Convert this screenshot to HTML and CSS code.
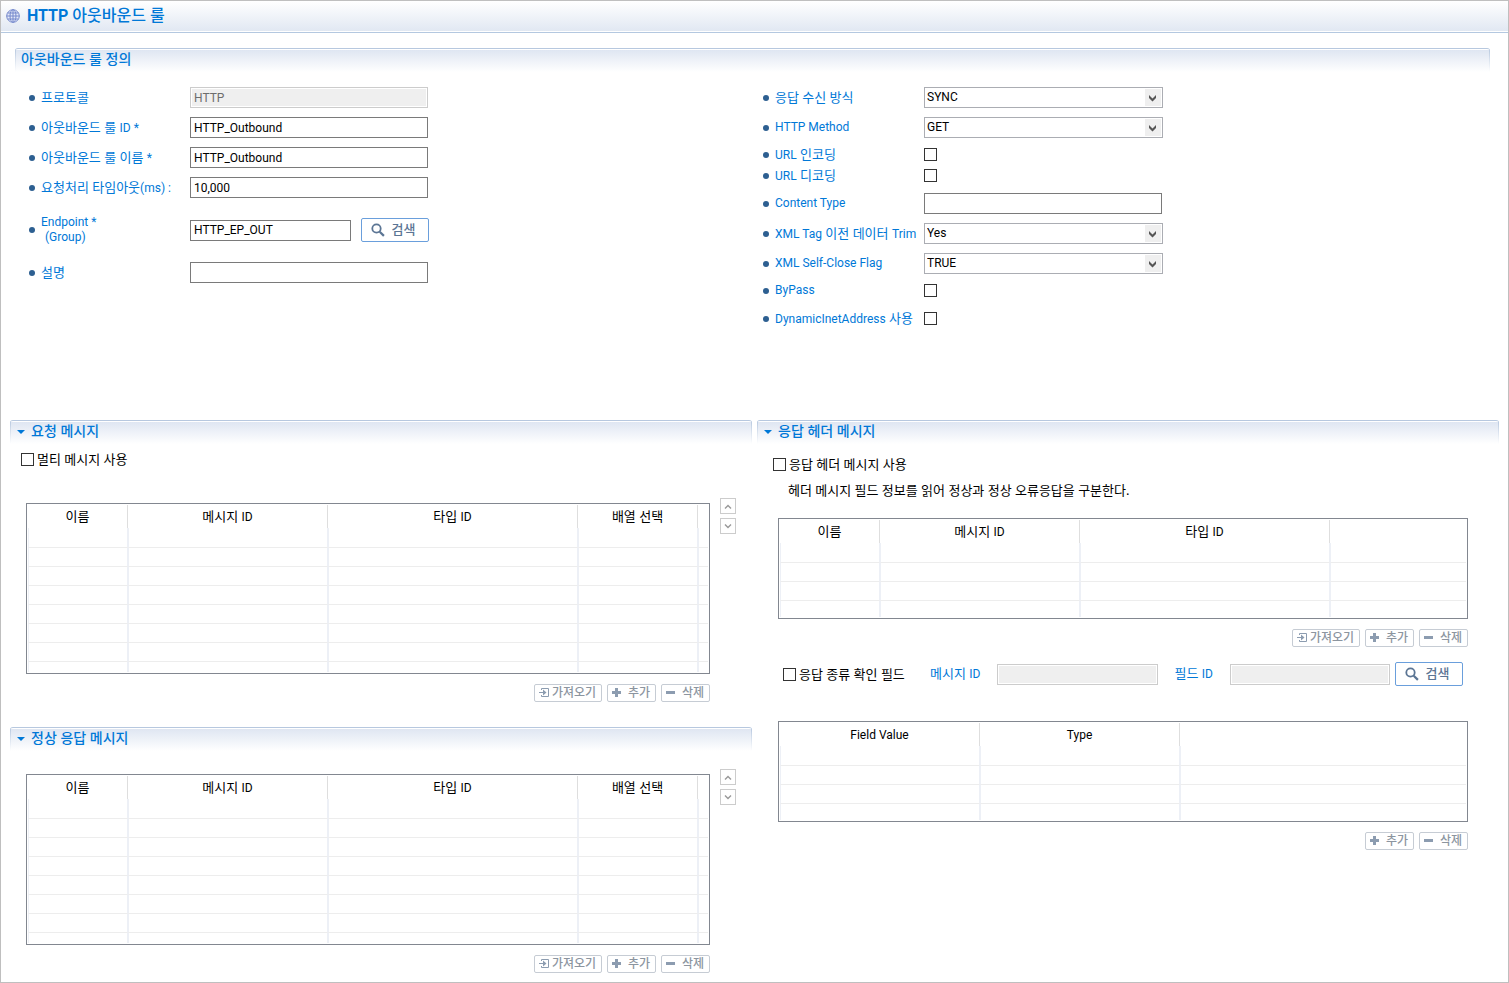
FILE: index.html
```html
<!DOCTYPE html>
<html lang="ko">
<head>
<meta charset="utf-8">
<title>HTTP 아웃바운드 룰</title>
<link rel="stylesheet" href="styles.css">
</head>
<body>
<svg class="sprite" aria-hidden="true">
  <symbol id="chevron" viewBox="0 0 9 7"><path d="M1 0v3l3.500 3.500L8 3V0L4.500 3.500z"/></symbol>
  <symbol id="search" viewBox="0 0 14 14"><circle cx="5.500" cy="5.500" r="4.200" fill="none" stroke="currentColor" stroke-width="1.800"/><path d="M8.700 8.700l4.200 4.200" stroke="currentColor" stroke-width="2.200"/></symbol>
  <symbol id="import" viewBox="0 0 10 9"><path d="M2.500 2V.500h7v8h-7V7" fill="none" stroke="currentColor"/><path d="M0 4h4V1.500l3.500 3L4 7.500V5H0z" fill="currentColor"/></symbol>
  <symbol id="plus" viewBox="0 0 9 9"><path d="M3 0h3v3h3v3H6v3H3V6H0V3h3z" fill="currentColor"/></symbol>
  <symbol id="minus" viewBox="0 0 9 9"><path d="M0 3h9v3H0z" fill="currentColor"/></symbol>
  <symbol id="up" viewBox="0 0 8 5"><path d="M1 4.500l3-3 3 3" fill="none" stroke="currentColor" stroke-width="1.400"/></symbol>
  <symbol id="down" viewBox="0 0 8 5"><path d="M1 .500l3 3 3-3" fill="none" stroke="currentColor" stroke-width="1.400"/></symbol>
</svg>
<div class="page">
  <header class="title-bar">
    <svg class="globe" viewBox="0 0 14 14" aria-hidden="true"><circle cx="7" cy="7" r="6.300"/><ellipse cx="7" cy="7" rx="3" ry="6.300"/><path d="M7 .700v12.600M.700 7h12.600M1.600 4h10.800M1.600 10h10.800"/></svg>
    <h1 class="title"><b>HTTP</b> 아웃바운드 룰</h1>
  </header>

  <section class="definition">
    <h2 class="section-head section-head-wide">아웃바운드 룰 정의</h2>
    <form class="form">
      <div class="fields">
        <div class="row"><label class="label" for="protocol">프로토콜</label><input class="text" id="protocol" value="HTTP" disabled></div>
        <div class="row"><label class="label" for="rule-id"><span>아웃바운드 룰 <span lang="en">ID *</span></span></label><input class="text" id="rule-id" value="HTTP_Outbound"></div>
        <div class="row"><label class="label" for="rule-name"><span>아웃바운드 룰 이름 <span lang="en">*</span></span></label><input class="text" id="rule-name" value="HTTP_Outbound"></div>
        <div class="row"><label class="label" for="timeout"><span>요청처리 타임아웃<span lang="en">(ms) :</span></span></label><input class="text" id="timeout" value="10,000"></div>
        <div class="row row-tall"><label class="label" for="endpoint"><span class="stack" lang="en"><span>Endpoint *</span><span class="indent">(Group)</span></span></label><input class="text text-short" id="endpoint" value="HTTP_EP_OUT"><button class="search search-gap" type="button"><svg class="search-icon"><use href="#search"/></svg>검색</button></div>
        <div class="row"><label class="label" for="desc">설명</label><input class="text" id="desc"></div>
      </div>
      <div class="fields">
        <div class="row"><label class="label" for="sync">응답 수신 방식</label><span class="select-box"><select class="select" id="sync"><option>SYNC</option></select><svg class="chevron"><use href="#chevron"/></svg></span></div>
        <div class="row"><label class="label" for="method"><span lang="en">HTTP Method</span></label><span class="select-box"><select class="select" id="method"><option>GET</option></select><svg class="chevron"><use href="#chevron"/></svg></span></div>
        <div class="pair">
          <div class="row row-check"><label class="label" for="encode"><span><span lang="en">URL</span> 인코딩</span></label><input class="check" type="checkbox" id="encode"></div>
          <div class="row row-check"><label class="label" for="decode"><span><span lang="en">URL</span> 디코딩</span></label><input class="check" type="checkbox" id="decode"></div>
        </div>
        <div class="row"><label class="label" for="ctype"><span lang="en">Content Type</span></label><input class="text" id="ctype"></div>
        <div class="row"><label class="label" for="trim"><span><span lang="en">XML Tag</span> 이전 데이터 <span lang="en">Trim</span></span></label><span class="select-box"><select class="select" id="trim"><option>Yes</option></select><svg class="chevron"><use href="#chevron"/></svg></span></div>
        <div class="row"><label class="label" for="selfclose"><span lang="en">XML Self-Close Flag</span></label><span class="select-box"><select class="select" id="selfclose"><option>TRUE</option></select><svg class="chevron"><use href="#chevron"/></svg></span></div>
        <div class="row row-check"><label class="label" for="bypass"><span lang="en">ByPass</span></label><input class="check" type="checkbox" id="bypass"></div>
        <div class="row row-check row-spaced"><label class="label" for="dynamic"><span><span lang="en">DynamicInetAddress</span> 사용</span></label><input class="check" type="checkbox" id="dynamic"></div>
      </div>
    </form>
  </section>

  <main class="panels">
    <div class="panel-column">
      <section>
        <h2 class="section-head"><button class="toggle" type="button">요청 메시지</button></h2>
        <label class="check-line"><input class="check" type="checkbox">멀티 메시지 사용</label>
        <div class="grid-area">
          <div class="grid-side">
            <div class="grid-main">
              <table class="grid">
                <colgroup><col class="c100"><col class="c200"><col class="c250"><col class="c120"><col></colgroup>
                <thead><tr><th>이름</th><th>메시지 <span lang="en">ID</span></th><th>타입 <span lang="en">ID</span></th><th>배열 선택</th><th class="last"></th></tr></thead>
                <tbody>
                  <tr><td></td><td></td><td></td><td></td><td class="last"></td></tr>
                  <tr><td></td><td></td><td></td><td></td><td class="last"></td></tr>
                  <tr><td></td><td></td><td></td><td></td><td class="last"></td></tr>
                  <tr><td></td><td></td><td></td><td></td><td class="last"></td></tr>
                  <tr><td></td><td></td><td></td><td></td><td class="last"></td></tr>
                  <tr><td></td><td></td><td></td><td></td><td class="last"></td></tr>
                  <tr><td></td><td></td><td></td><td></td><td class="last"></td></tr>
                  <tr><td></td><td></td><td></td><td></td><td class="last"></td></tr>
                </tbody>
              </table>
              <div class="actions">
                <button class="action" type="button"><svg class="import-icon"><use href="#import"/></svg>가져오기</button>
                <button class="action action-small" type="button"><svg class="sign-icon"><use href="#plus"/></svg>추가</button>
                <button class="action action-small" type="button"><svg class="sign-icon"><use href="#minus"/></svg>삭제</button>
              </div>
            </div>
            <div class="movers">
              <button class="mover" type="button" aria-label="위로"><svg class="mover-icon"><use href="#up"/></svg></button>
              <button class="mover" type="button" aria-label="아래로"><svg class="mover-icon"><use href="#down"/></svg></button>
            </div>
          </div>
        </div>
      </section>
      <section>
        <h2 class="section-head"><button class="toggle" type="button">정상 응답 메시지</button></h2>
        <div class="grid-area">
          <div class="grid-side">
            <div class="grid-main">
              <table class="grid">
                <colgroup><col class="c100"><col class="c200"><col class="c250"><col class="c120"><col></colgroup>
                <thead><tr><th>이름</th><th>메시지 <span lang="en">ID</span></th><th>타입 <span lang="en">ID</span></th><th>배열 선택</th><th class="last"></th></tr></thead>
                <tbody>
                  <tr><td></td><td></td><td></td><td></td><td class="last"></td></tr>
                  <tr><td></td><td></td><td></td><td></td><td class="last"></td></tr>
                  <tr><td></td><td></td><td></td><td></td><td class="last"></td></tr>
                  <tr><td></td><td></td><td></td><td></td><td class="last"></td></tr>
                  <tr><td></td><td></td><td></td><td></td><td class="last"></td></tr>
                  <tr><td></td><td></td><td></td><td></td><td class="last"></td></tr>
                  <tr><td></td><td></td><td></td><td></td><td class="last"></td></tr>
                  <tr><td></td><td></td><td></td><td></td><td class="last"></td></tr>
                </tbody>
              </table>
              <div class="actions">
                <button class="action" type="button"><svg class="import-icon"><use href="#import"/></svg>가져오기</button>
                <button class="action action-small" type="button"><svg class="sign-icon"><use href="#plus"/></svg>추가</button>
                <button class="action action-small" type="button"><svg class="sign-icon"><use href="#minus"/></svg>삭제</button>
              </div>
            </div>
            <div class="movers">
              <button class="mover" type="button" aria-label="위로"><svg class="mover-icon"><use href="#up"/></svg></button>
              <button class="mover" type="button" aria-label="아래로"><svg class="mover-icon"><use href="#down"/></svg></button>
            </div>
          </div>
        </div>
      </section>
    </div>

    <section class="panel-column">
      <h2 class="section-head"><button class="toggle" type="button">응답 헤더 메시지</button></h2>
      <div class="header-body">
        <label class="check-line check-line-outer"><input class="check" type="checkbox">응답 헤더 메시지 사용</label>
        <p class="note">헤더 메시지 필드 정보를 읽어 정상과 정상 오류응답을 구분한다.</p>
        <table class="grid grid-low">
          <colgroup><col class="c100"><col class="c200"><col class="c250"><col></colgroup>
          <thead><tr><th>이름</th><th>메시지 <span lang="en">ID</span></th><th>타입 <span lang="en">ID</span></th><th class="last"></th></tr></thead>
          <tbody>
            <tr><td></td><td></td><td></td><td class="last"></td></tr>
            <tr><td></td><td></td><td></td><td class="last"></td></tr>
            <tr><td></td><td></td><td></td><td class="last"></td></tr>
            <tr><td></td><td></td><td></td><td class="last"></td></tr>
          </tbody>
        </table>
        <div class="actions">
          <button class="action" type="button"><svg class="import-icon"><use href="#import"/></svg>가져오기</button>
          <button class="action action-small" type="button"><svg class="sign-icon"><use href="#plus"/></svg>추가</button>
          <button class="action action-small" type="button"><svg class="sign-icon"><use href="#minus"/></svg>삭제</button>
        </div>
        <div class="field-line">
          <label class="check-line check-line-inline"><input class="check" type="checkbox">응답 종류 확인 필드</label>
          <label class="blue message-label" for="msg-id">메시지 <span lang="en">ID</span></label><input class="text text-short" id="msg-id" disabled>
          <label class="blue field-label" for="field-id">필드 <span lang="en">ID</span></label><input class="text text-short" id="field-id" disabled>
          <button class="search" type="button"><svg class="search-icon"><use href="#search"/></svg>검색</button>
        </div>
        <table class="grid grid-low">
          <colgroup><col class="c200"><col class="c200"><col></colgroup>
          <thead><tr><th><span lang="en">Field Value</span></th><th><span lang="en">Type</span></th><th class="last"></th></tr></thead>
          <tbody>
            <tr><td></td><td></td><td class="last"></td></tr>
            <tr><td></td><td></td><td class="last"></td></tr>
            <tr><td></td><td></td><td class="last"></td></tr>
            <tr><td></td><td></td><td class="last"></td></tr>
          </tbody>
        </table>
        <div class="actions">
          <button class="action action-small" type="button"><svg class="sign-icon"><use href="#plus"/></svg>추가</button>
          <button class="action action-small" type="button"><svg class="sign-icon"><use href="#minus"/></svg>삭제</button>
        </div>
      </div>
    </section>
  </main>
</div>
</body>
</html>
```

FILE: styles.css
```css
* { box-sizing: border-box; }

body {
  margin: 0;
  background: #fff;
  color: #000;
  font: 13px/15px "Noto Sans", "Noto Sans CJK KR", sans-serif;
}

button, input, select { margin: 0; font: inherit; color: inherit; }
input, select, [lang="en"] { font-family: Roboto, "Noto Sans CJK KR", sans-serif; font-size: 12px; }
h1, h2, p { margin: 0; }
.sprite { display: none; }

.page {
  min-height: 100vh;
  border: 1px solid #bfbfbf;
}

.title-bar {
  display: flex;
  align-items: center;
  gap: 7px;
  height: 32px;
  padding: 0 5px 2px;
  border-bottom: 1px solid #b4c8e0;
  background: linear-gradient(#fff, #e0e7f2);
  box-shadow: inset 0 -1px #fff;
}
.globe { width: 14px; height: 14px; fill: #e4e9f8; stroke: #7488cc; stroke-width: 1; }
.title { color: #0078d7; font: 500 16px/20px Roboto, "Noto Sans CJK KR", sans-serif; }

.definition { padding-top: 15px; }

.section-head {
  height: 24px;
  padding-left: 10px;
  border-top: 1px solid #b7c8df;
  border-radius: 3px 3px 0 0;
  background:
    linear-gradient(#b7c8df, #fff) left / 1px 100% no-repeat,
    linear-gradient(#b7c8df, #fff) right / 1px 100% no-repeat,
    linear-gradient(#fff 1px, #dfe6f2 1px, #fff);
  color: #0078d7;
  font-size: 14px;
  line-height: 20px;
  font-weight: 500;
}
.section-head-wide { margin: 0 18px 0 14px; padding-left: 6px; }

.toggle {
  display: flex;
  align-items: center;
  gap: 5px;
  padding: 0;
  border: 0;
  background: none;
  line-height: 20px;
}
.toggle::before {
  content: "";
  margin: 2px 1px 0;
  border: 4px solid transparent;
  border-top-color: #0078d7;
  border-bottom: 0;
}
.section-head .toggle { margin-left: -4px; }

.form {
  display: grid;
  grid-template-columns: 1fr 1fr;
  padding: 15px 11px 0 28px;
}
.fields { display: flex; flex-direction: column; gap: 9px; }
.row { display: flex; align-items: center; height: 21px; }
.row-check { height: 15px; }
.row-tall { margin: 8px 0; height: 30px; }
.row-spaced { margin-top: 4px; }
.pair { display: flex; flex-direction: column; gap: 6px; padding-bottom: 1px; }

.label {
  display: flex;
  align-items: center;
  flex: none;
  gap: 6px;
  width: 161px;
  color: #0078d7;
  white-space: nowrap;
}
.label::before {
  content: "";
  width: 6px;
  height: 6px;
  border-radius: 50%;
  background: #2d5f91;
}
.stack { display: flex; flex-direction: column; }
.indent { padding-left: 4px; }

.text {
  width: 238px;
  height: 21px;
  padding: 0 3px;
  border: 1px solid #7a7a7a;
  border-radius: 0;
  background: #fff;
}
.text:disabled {
  border-color: #ccc;
  background: #efefef;
  box-shadow: inset 0 0 0 1px #fff;
  color: #6d6d6d;
}
.text-short { width: 161px; }

.select-box { position: relative; width: 239px; height: 21px; }
.select {
  appearance: none;
  display: block;
  width: 100%;
  height: 100%;
  padding: 0 20px 0 2px;
  border: 1px solid #abadb3;
  border-radius: 0;
  background: linear-gradient(#efefef, #efefef) right 1px center / 16px 17px no-repeat #fff;
}
.chevron {
  position: absolute;
  top: 8px;
  right: 6px;
  width: 9px;
  height: 7px;
  fill: #555;
  pointer-events: none;
}

.check {
  appearance: none;
  flex: none;
  width: 13px;
  height: 13px;
  border: 1px solid #333;
  background: #fff;
}

.search {
  display: flex;
  align-items: center;
  justify-content: center;
  gap: 7px;
  flex: none;
  width: 68px;
  height: 24px;
  padding: 0 4px 1px 0;
  border: 1px solid #6a9fdc;
  border-radius: 2px;
  background: #fff;
  color: #5b7594;
  font-weight: 500;
}
.search-gap { margin-left: 10px; }
.search-icon { width: 14px; height: 14px; }

.panels {
  display: grid;
  grid-template-columns: 1fr 1fr;
  gap: 5px;
  padding: 94px 9px 0;
}
.panel-column { display: flex; flex-direction: column; gap: 25px; min-width: 0; }

.check-line {
  display: flex;
  align-items: center;
  gap: 3px;
  padding: 8px 0 0 11px;
}
.check-line-outer { padding: 0; margin-left: -5px; }
.check-line-inline { flex: none; padding: 0 0 0 5px; width: 152px; }

.grid-area { padding: 23px 16px 0; }
.check-line + .grid-area { padding-top: 36px; }
.grid-side { display: flex; gap: 10px; }
.grid-main { flex: 1; min-width: 0; }
.movers { display: flex; flex-direction: column; gap: 4px; margin-top: -5px; }
.mover {
  display: flex;
  align-items: center;
  justify-content: center;
  width: 16px;
  height: 16px;
  padding: 0;
  border: 1px solid #ccc;
  background: #fff;
  color: #999;
}
.mover-icon { width: 8px; height: 5px; }

.grid {
  width: 100%;
  table-layout: fixed;
  border: 1px solid #828790;
  border-collapse: separate;
  border-spacing: 0;
  padding: 1px;
}
.c100 { width: 100px; }
.c120 { width: 120px; }
.c200 { width: 200px; }
.c250 { width: 250px; }
.grid th {
  height: 23px;
  padding: 0;
  border-right: 1px solid #dedede;
  font-weight: 400;
}
.grid td {
  height: 20px;
  padding: 0;
  border: solid #edf0f6;
  border-width: 0 1px 1px;
  border-bottom-color: #ededed;
}
.grid tr + tr td { height: 19px; }
.grid tbody tr:last-child td { height: 10px; border-bottom: 0; }
.grid-low tbody tr:last-child td { height: 16px; }
.grid tr .last { border-right: 0; }

.actions { display: flex; justify-content: flex-end; gap: 5px; margin-top: 10px; }
.action {
  display: flex;
  align-items: center;
  justify-content: center;
  gap: 3px;
  width: 68px;
  height: 18px;
  padding: 0 1px 1px 0;
  border: 1px solid #c6ccd4;
  border-radius: 2px;
  background: #fff;
  color: #8c959f;
  font-size: 12px;
  font-weight: 500;
}
.action-small { gap: 7px; width: 49px; }
.import-icon { width: 10px; height: 9px; color: #8c9cb0; }
.sign-icon { width: 9px; height: 9px; color: #8c9cb0; }

.header-body { margin: -12px 31px 0 21px; }
.note { padding: 11px 0 0 10px; }
.header-body .note + .grid { margin-top: 20px; }
.field-line { display: flex; align-items: center; margin: 15px 5px 35px 0; }
.blue { color: #0078d7; white-space: nowrap; }
.message-label { flex: none; width: 67px; }
.field-label { flex: none; width: 55px; margin-left: 17px; }
.field-line .text { flex: 1; min-width: 0; }
.field-line .search { margin-left: 5px; }
```
